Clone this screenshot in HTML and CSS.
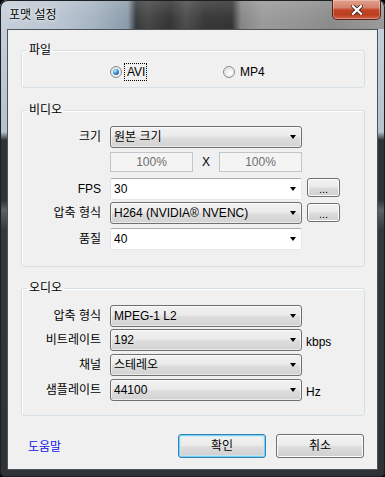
FILE: index.html
```html
<!DOCTYPE html>
<html lang="ko">
<head>
<meta charset="utf-8">
<title>포맷 설정</title>
<link rel="stylesheet" href="styles.css">
</head>
<body>
<div class="window">
  <div class="titlebar">
    <span class="title">포맷 설정</span>
    <div class="close">
      <svg width="12" height="10" viewBox="0 0 12 10" aria-hidden="true">
        <path d="M2 1.2 L10 8.8 M10 1.2 L2 8.8" stroke="#4a2a24" stroke-width="4" stroke-linecap="square" fill="none"/>
        <path d="M2 1.2 L10 8.8 M10 1.2 L2 8.8" stroke="#ffffff" stroke-width="2.2" stroke-linecap="square" fill="none"/>
      </svg>
    </div>
  </div>
  <div class="client">
    <fieldset class="group g-file">
      <legend>파일</legend>
      <div class="radios">
        <div class="radio first"><span class="rb checked"></span><span class="rtext focus">AVI</span></div>
        <div class="radio"><span class="rb"></span><span class="rtext">MP4</span></div>
      </div>
    </fieldset>

    <fieldset class="group g-video">
      <legend>비디오</legend>
      <div class="row">
        <span class="lbl">크기</span>
        <div class="combo ro"><span class="val">원본 크기</span><span class="arr"></span></div>
      </div>
      <div class="row size mt4">
        <span class="lbl"></span>
        <div class="sizes">
          <span class="field">100%</span>
          <span class="x">X</span>
          <span class="field">100%</span>
        </div>
      </div>
      <div class="row mt6">
        <span class="lbl">FPS</span>
        <div class="combo ed"><span class="val">30</span><span class="arr"></span></div>
        <div class="btn dots">...</div>
      </div>
      <div class="row mt2">
        <span class="lbl">압축 형식</span>
        <div class="combo ro"><span class="val">H264 (NVIDIA® NVENC)</span><span class="arr"></span></div>
        <div class="btn dots low">...</div>
      </div>
      <div class="row mt4">
        <span class="lbl">품질</span>
        <div class="combo ed"><span class="val">40</span><span class="arr"></span></div>
      </div>
    </fieldset>

    <fieldset class="group g-audio">
      <legend>오디오</legend>
      <div class="row">
        <span class="lbl">압축 형식</span>
        <div class="combo ro"><span class="val">MPEG-1 L2</span><span class="arr"></span></div>
      </div>
      <div class="row mt2">
        <span class="lbl">비트레이트</span>
        <div class="combo ro"><span class="val">192</span><span class="arr"></span></div>
        <span class="unit">kbps</span>
      </div>
      <div class="row mt3">
        <span class="lbl">채널</span>
        <div class="combo ro"><span class="val">스테레오</span><span class="arr"></span></div>
      </div>
      <div class="row mt3">
        <span class="lbl">샘플레이트</span>
        <div class="combo ro"><span class="val">44100</span><span class="arr"></span></div>
        <span class="unit">Hz</span>
      </div>
    </fieldset>

    <div class="footer">
      <a class="help">도움말</a>
      <div class="btn push default">확인</div>
      <div class="btn push">취소</div>
    </div>
  </div>
</div>
</body>
</html>
```

FILE: styles.css
```css
html, body {
  margin: 0;
  padding: 0;
  background: #000;
}

body {
  font-family: "Liberation Sans", "Noto Sans CJK KR", sans-serif;
  font-size: 12px;
  line-height: 14px;
  color: #000;
}

.window {
  width: 385px;
  height: 477px;
  box-sizing: border-box;
  padding-bottom: 7px;
  display: flex;
  flex-direction: column;
  border-radius: 7px 7px 5px 5px;
  overflow: hidden;
  background: linear-gradient(to bottom, #c9d3dd 0, #b5c1cd 132px, #2e3237 140px, #2f3338 200px, #5d6167 210px, #34383d 230px, #2e3237 100%);
  box-shadow: inset 0 0 0 1px #1c2024;
}

/* title bar */
.titlebar {
  height: 29px;
  display: flex;
  align-items: flex-start;
  padding-left: 9px;
  background:
    linear-gradient(to bottom, rgba(255,255,255,0.14) 0, rgba(255,255,255,0.03) 60%, rgba(0,0,0,0) 100%),
    linear-gradient(to right, #c6d0da 0, #b8c4d0 60px, #a5b3c1 95px, #8a9aa9 128px, #36393c 136px, #454545 147px, #333333 170px, #4c4c4c 186px, #363636 205px, #333333 232px, #858585 241px, #9a9a9a 262px, #939393 300px, #8a8a8a 330px, #9a9a9a 385px);
  box-shadow: inset 1px 1px 0 #1c2024, inset -1px 0 0 #1c2024;
  border-radius: 7px 7px 0 0;
}

.title {
  padding-top: 7px;
  font-family: "Noto Sans CJK KR", sans-serif;
  font-size: 12px;
  line-height: 14px;
  text-shadow: 0 0 5px rgba(255,255,255,0.9), 0 0 2px rgba(255,255,255,0.9);
}

.close {
  margin-left: auto;
  margin-right: 4px;
  width: 49px;
  height: 20px;
  box-sizing: border-box;
  border: 1px solid #5a2318;
  border-top: none;
  border-radius: 0 0 5px 5px;
  background: linear-gradient(to bottom, #e2a08c 0, #d4826b 40%, #c24427 52%, #bb3e1f 78%, #d0654a 100%);
  box-shadow: inset 0 0 0 1px rgba(255,255,255,0.3);
  display: flex;
  align-items: center;
  justify-content: center;
}

/* client area */
.client {
  margin: 0 7px;
  height: 441px;
  box-sizing: border-box;
  border: 1px solid #4b535b;
  background: #f0f0f0;
  display: flex;
  flex-direction: column;
}

.group {
  margin: 0 12px 0 13px;
  padding: 0;
  min-width: 0;
  border: 1px solid #d5dfe5;
  border-radius: 3px;
  box-shadow: inset 1px 1px 0 #fff;
}

.group legend {
  margin-left: 5px;
  padding: 0 2px;
  font-size: 12px;
  line-height: 14px;
}

.g-file {
  margin-top: 13px;
  padding: 7px 0 7px;
}

.g-video {
  margin-top: 15px;
  padding: 9px 0 16px;
}

.g-audio {
  margin-top: 14px;
  padding: 10px 0 14px;
}

/* radios */
.radios {
  display: flex;
  padding-left: 88px;
  height: 16px;
  align-items: center;
}

.radio {
  display: flex;
  align-items: center;
}

.radio.first {
  width: 113px;
}

.rb {
  width: 12px;
  height: 12px;
  box-sizing: border-box;
  border-radius: 50%;
  border: 1px solid #8b8c8d;
  background: radial-gradient(circle at 65% 65%, #ffffff 0, #f2f2f2 40%, #d2d2d2 100%);
  box-shadow: inset 0 0 0 1px #e8e8e8;
  display: flex;
  align-items: center;
  justify-content: center;
  margin-right: 3px;
}

.rb.checked::after {
  content: "";
  width: 6px;
  height: 6px;
  border-radius: 50%;
  background: radial-gradient(circle at 35% 30%, #c9eeff 0, #4aa8e6 35%, #1a5ea6 75%, #0d3f78 100%);
}

.rtext {
  padding: 1px 1px 1px 2px;
  line-height: 14px;
}

.rtext.focus {
  outline: 1px dotted #000;
  outline-offset: 0;
}

/* form rows */
.row {
  display: grid;
  grid-template-columns: 88px 192px auto;
  align-items: center;
  height: 22px;
}

.row.size {
  height: 20px;
}

.mt2 { margin-top: 2px; }
.mt3 { margin-top: 3px; }
.mt4 { margin-top: 4px; }
.mt6 { margin-top: 6px; }

.lbl {
  text-align: right;
  padding-right: 9px;
  white-space: nowrap;
}

.combo {
  height: 22px;
  box-sizing: border-box;
  display: flex;
  align-items: center;
  padding: 0 5px 0 3px;
  border-radius: 3px;
  white-space: nowrap;
}

.combo.ro {
  border: 1px solid #707070;
  background: linear-gradient(to bottom, #f2f2f2 0, #ebebeb 45%, #dddddd 55%, #d2d2d2 100%);
  box-shadow: inset 0 0 0 1px rgba(255,255,255,0.55);
}

.combo.ed {
  border: 1px solid #e3e9ef;
  border-top-color: #abadb3;
  border-left-color: #e2e3ea;
  border-radius: 2px;
  background: #fff;
}

.combo .val {
  flex: 1;
}

.arr {
  width: 0;
  height: 0;
  border-left: 3.5px solid transparent;
  border-right: 3.5px solid transparent;
  border-top: 4px solid #000;
}

.sizes {
  display: flex;
  justify-content: space-between;
  align-items: center;
  height: 20px;
}

.field {
  width: 83px;
  height: 20px;
  box-sizing: border-box;
  border: 1px solid #c3c6c9;
  background: #f4f4f4;
  color: #6d6d6d;
  text-align: center;
  line-height: 18px;
}

.x {
  width: 26px;
  text-align: center;
}

.unit {
  margin-left: 4px;
  margin-top: 4px;
}

/* buttons */
.btn {
  box-sizing: border-box;
  border: 1px solid #707070;
  border-radius: 3px;
  background: linear-gradient(to bottom, #f2f2f2 0, #ebebeb 48%, #dddddd 52%, #cfcfcf 100%);
  box-shadow: inset 0 0 0 1px #fbfbfb;
  display: flex;
  align-items: center;
  justify-content: center;
}

.dots {
  margin-left: 5px;
  width: 33px;
  height: 19px;
  align-self: start;
  font-size: 11px;
  line-height: 12px;
  padding-top: 3px;
}

.dots.low {
  margin-top: 1px;
}

.footer {
  margin-top: 18px;
  display: flex;
  align-items: center;
  padding: 0 13px 0 20px;
}

.help {
  flex: 1;
  color: #1414ee;
  text-decoration: none;
  padding-top: 1px;
}

.push {
  width: 88px;
  height: 24px;
}

.push + .push {
  margin-left: 10px;
}

.push.default {
  border-color: #3c7fb1;
  box-shadow: inset 0 0 0 1px #6fd3f7, inset 0 0 0 2px rgba(190,236,252,0.6);
}
```
